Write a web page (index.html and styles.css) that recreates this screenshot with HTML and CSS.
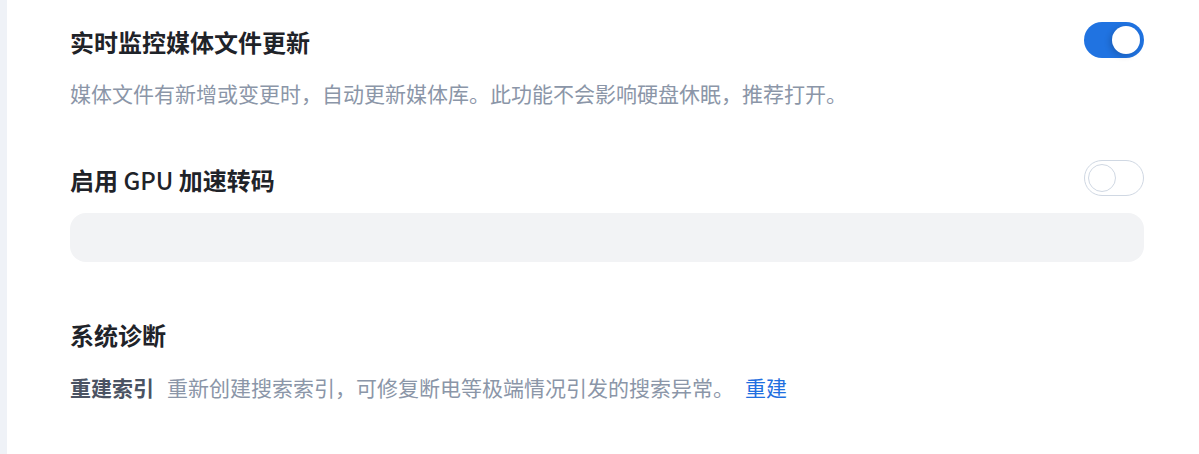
FILE: index.html
```html
<!DOCTYPE html>
<html lang="zh-CN">
<head>
<meta charset="utf-8">
<link rel="stylesheet" href="styles.css">
</head>
<body>
<div class="page">
  <div class="rail"></div>
  <main class="main">
    <div class="setting-row">
      <h2 class="title">实时监控媒体文件更新</h2>
      <span class="toggle on"><span class="knob"></span></span>
    </div>
    <p class="desc">媒体文件有新增或变更时，自动更新媒体库。此功能不会影响硬盘休眠，推荐打开。</p>

    <div class="setting-row row2">
      <h2 class="title">启用 <span class="latin">GPU</span> 加速转码</h2>
      <span class="toggle off"><span class="knob"></span></span>
    </div>
    <div class="gray-box"></div>

    <h2 class="title section-title">系统诊断</h2>
    <div class="action-row">
      <span class="action-label">重建索引</span>
      <span class="action-desc">重新创建搜索索引，可修复断电等极端情况引发的搜索异常。</span>
      <a class="action-link" href="#">重建</a>
    </div>
  </main>
</div>
</body>
</html>
```

FILE: styles.css
```css
html, body {
  margin: 0;
  padding: 0;
  background: #ffffff;
}
body {
  font-family: "Noto Sans CJK SC", "Noto Sans", sans-serif;
}
.page {
  display: flex;
  min-height: 454px;
}
.rail {
  width: 7px;
  flex: none;
  background: #eff2f7;
}
.main {
  flex: 1;
  padding: 22px 55px 0 63px;
}
.setting-row {
  display: flex;
  justify-content: space-between;
  align-items: center;
  height: 36px;
}
.title {
  margin: 0;
  font-size: 24px;
  line-height: 32px;
  font-weight: 700;
  color: #1f2329;
  padding-top: 3px;
}
.latin {
  font-weight: 500;
}
.desc {
  margin: 19px 0 0;
  font-size: 21px;
  line-height: 32px;
  color: #8b96a8;
}
.row2 {
  margin-top: 51px;
}
.toggle {
  position: relative;
  width: 60px;
  height: 36px;
  border-radius: 18px;
  box-sizing: border-box;
  flex: none;
}
.toggle.on {
  background: #2073e1;
}
.toggle.off {
  background: #ffffff;
  border: 1px solid #d0d8e3;
}
.knob {
  position: absolute;
  top: 4px;
  width: 28px;
  height: 28px;
  border-radius: 50%;
  box-sizing: border-box;
}
.toggle.on .knob {
  right: 4px;
  background: #ffffff;
  box-shadow: -2px 2px 6px rgba(0, 0, 0, 0.18);
}
.toggle.off .knob {
  left: 3px;
  top: 3px;
  border: 1px solid #d0d8e3;
  background: #ffffff;
}
.gray-box {
  margin-top: 17px;
  height: 49px;
  border-radius: 16px;
  background: #f2f3f5;
}
.section-title {
  margin-top: 54px;
}
.action-row {
  display: flex;
  align-items: baseline;
  margin-top: 20px;
  font-size: 21px;
  line-height: 32px;
}
.action-label {
  font-weight: 700;
  color: #4b5363;
  margin-right: 13px;
}
.action-desc {
  color: #8b96a8;
}
.action-link {
  margin-left: 11px;
  color: #1f6fe0;
  text-decoration: none;
}
```
